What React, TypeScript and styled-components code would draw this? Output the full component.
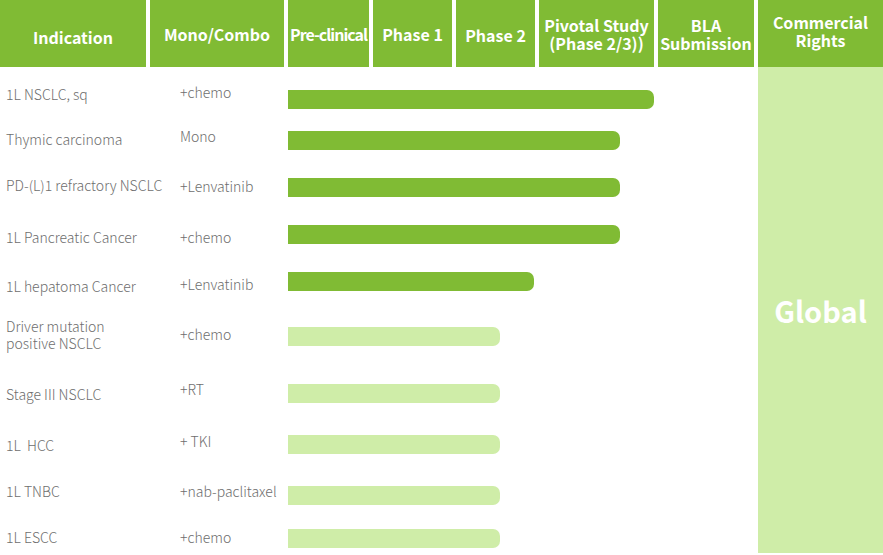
import styled, { createGlobalStyle } from "styled-components";

interface Program {
  indication: string[];
  combo: string;
  bar: number;
  active: boolean;
  height: number;
  labelTop: number;
  comboTop: number;
}

const DARK = "#80bb34";
const LIGHT = "#cfeda8";

const headers = [
  { title: ["Indication"], top: 28, tight: false },
  { title: ["Mono/Combo"], top: 25, tight: false },
  { title: ["Pre-clinical"], top: 25, tight: true },
  { title: ["Phase 1"], top: 25, tight: false },
  { title: ["Phase 2"], top: 26, tight: false },
  { title: ["Pivotal Study", "(Phase 2/3))"], top: 16, tight: false },
  { title: ["BLA", "Submission"], top: 16, tight: false },
  { title: ["Commercial", "Rights"], top: 13, tight: false },
];

const programs: Program[] = [
  { indication: ["1L NSCLC, sq"], combo: "+chemo", bar: 366, active: true, height: 41, labelTop: 6, comboTop: 4 },
  { indication: ["Thymic carcinoma"], combo: "Mono", bar: 332, active: true, height: 47, labelTop: 10, comboTop: 7 },
  { indication: ["PD-(L)1 refractory NSCLC"], combo: "+Lenvatinib", bar: 332, active: true, height: 47, labelTop: 9, comboTop: 10 },
  { indication: ["1L Pancreatic Cancer"], combo: "+chemo", bar: 332, active: true, height: 47, labelTop: 14, comboTop: 14 },
  { indication: ["1L hepatoma Cancer"], combo: "+Lenvatinib", bar: 246, active: true, height: 55, labelTop: 16, comboTop: 14 },
  { indication: ["Driver mutation", "positive NSCLC"], combo: "+chemo", bar: 212, active: false, height: 57, labelTop: 1, comboTop: 9 },
  { indication: ["Stage III NSCLC"], combo: "+RT", bar: 212, active: false, height: 51, labelTop: 12, comboTop: 7 },
  { indication: ["1L\u00a0 HCC"], combo: "+ TKI", bar: 212, active: false, height: 51, labelTop: 12, comboTop: 8 },
  { indication: ["1L TNBC"], combo: "+nab-paclitaxel", bar: 212, active: false, height: 43, labelTop: 7, comboTop: 7 },
  { indication: ["1L ESCC"], combo: "+chemo", bar: 212, active: false, height: 34, labelTop: 10, comboTop: 10 },
];

function App() {
  return (
    <>
      <GlobalStyle />
      <Table>
        <HeaderRow>
          {headers.map((h) => (
            <HeaderCell key={h.title[0]} $top={h.top} $tight={h.tight}>
              <span>
                {h.title.map((line) => (
                  <div key={line}>{line}</div>
                ))}
              </span>
            </HeaderCell>
          ))}
        </HeaderRow>
        <Body>
          <Rows>
            {programs.map((p) => (
              <Row key={p.indication[0]} $height={p.height}>
                <Label $top={p.labelTop}>
                  {p.indication.map((line) => (
                    <div key={line}>{line}</div>
                  ))}
                </Label>
                <Combo $top={p.comboTop}>{p.combo}</Combo>
                <BarTrack>
                  <Bar $active={p.active} style={{ width: p.bar }} />
                </BarTrack>
              </Row>
            ))}
          </Rows>
          <Rights>Global</Rights>
        </Body>
      </Table>
    </>
  );
}

const GlobalStyle = createGlobalStyle`
  html, body {
    margin: 0;
    padding: 0;
    background: #fff;
  }
  body {
    font-family: "Noto Sans CJK SC", "Noto Sans", sans-serif;
  }
`;

const Table = styled.div`
  width: 883px;
  height: 555px;
  display: flex;
  flex-direction: column;
  overflow: hidden;
`;

const HeaderRow = styled.div`
  display: grid;
  grid-template-columns: 146px 134px 81px 79px 79px 115px 96px 125px;
  column-gap: 4px;
  height: 67px;
`;

const HeaderCell = styled.div<{ $top: number; $tight: boolean }>`
  background: ${DARK};
  color: #fff;
  font-weight: 700;
  font-size: 16px;
  line-height: 18px;
  letter-spacing: ${(p) => (p.$tight ? "-1px" : "0")};
  text-align: center;
  white-space: nowrap;
  display: flex;
  justify-content: center;
  padding-top: ${(p) => p.$top}px;
  box-sizing: border-box;
`;

const Body = styled.div`
  display: grid;
  grid-template-columns: 754px 125px;
  column-gap: 4px;
  height: 486px;
`;

const Rows = styled.div`
  display: flex;
  flex-direction: column;
  padding-top: 13px;
`;

const Row = styled.div<{ $height: number }>`
  display: grid;
  grid-template-columns: 180px 108px 1fr;
  align-items: start;
  height: ${(p) => p.$height}px;
  color: #6e6e6e;
  font-size: 14px;
  font-weight: 300;
  line-height: 17px;
`;

const Label = styled.div<{ $top: number }>`
  padding-left: 6px;
  margin-top: ${(p) => p.$top}px;
  white-space: nowrap;
`;

const Combo = styled.div<{ $top: number }>`
  margin-top: ${(p) => p.$top}px;
  white-space: nowrap;
`;

const BarTrack = styled.div`
  padding-top: 10px;
`;

const Bar = styled.div<{ $active: boolean }>`
  height: 19px;
  background: ${(p) => (p.$active ? DARK : LIGHT)};
  border-radius: 0 7px 7px 0;
`;

const Rights = styled.div`
  background: ${LIGHT};
  color: #fff;
  font-weight: 700;
  font-size: 29px;
  display: flex;
  align-items: center;
  justify-content: center;
  height: 486px;
`;

export default App;
